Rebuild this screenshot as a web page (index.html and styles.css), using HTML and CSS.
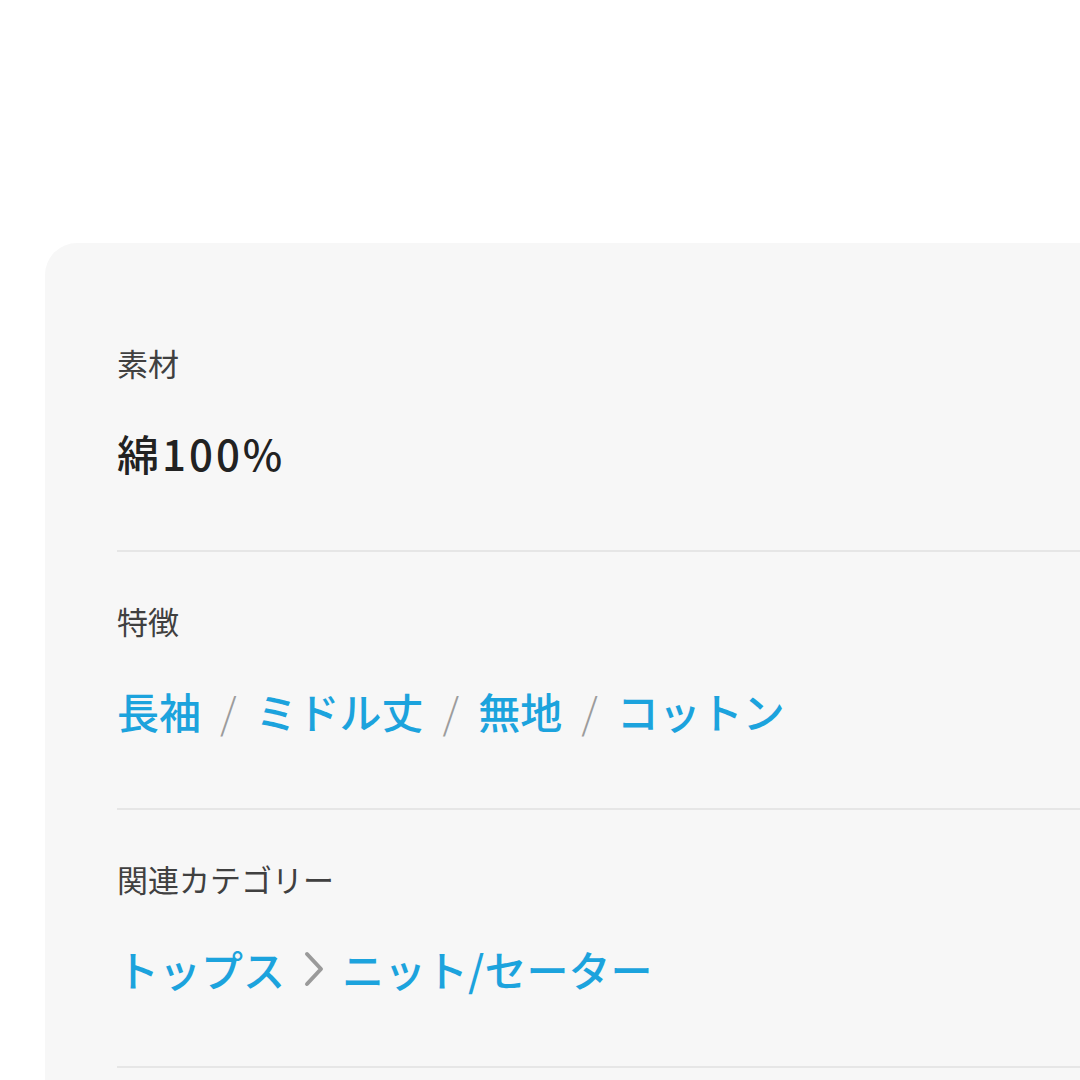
FILE: index.html
```html
<!DOCTYPE html>
<html lang="ja">
<head>
<meta charset="utf-8">
<link rel="stylesheet" href="styles.css">
</head>
<body>
<div class="page">
  <div class="card">
    <section class="row">
      <div class="label">素材</div>
      <div class="value material">綿100%</div>
    </section>
    <section class="row">
      <div class="label">特徴</div>
      <div class="value links">
        <span class="link">長袖</span><span class="sep">/</span><span class="link">ミドル丈</span><span class="sep">/</span><span class="link">無地</span><span class="sep">/</span><span class="link">コットン</span>
      </div>
    </section>
    <section class="row">
      <div class="label">関連カテゴリー</div>
      <div class="value links">
        <span class="link">トップス</span><span class="chev"><svg width="22" height="36" viewBox="0 0 22 36"><path d="M4 3 L18 18 L4 33" fill="none" stroke="#9a9a9a" stroke-width="4" stroke-linecap="round" stroke-linejoin="round"/></svg></span><span class="link">ニット/セーター</span>
      </div>
    </section>
    <section class="row"></section>
  </div>
</div>
</body>
</html>
```

FILE: styles.css
```css
html, body {
  margin: 0;
  padding: 0;
  background: #ffffff;
  overflow: hidden;
}
body {
  width: 1080px;
  height: 1080px;
  font-family: "Noto Sans CJK JP", "Noto Sans", sans-serif;
}
.page {
  padding-top: 243px;
  padding-left: 45px;
}
.card {
  width: 1100px;
  background: #f7f7f7;
  border-top-left-radius: 32px;
  padding-top: 51px;
  padding-left: 72px;
}
.row {
  padding-top: 47px;
  padding-bottom: 69px;
  border-bottom: 2px solid #e6e6e6;
}
.label {
  font-size: 31px;
  line-height: 44px;
  color: #404040;
}
.value {
  margin-top: 40px;
  font-size: 42px;
  line-height: 56px;
  font-weight: 500;
  color: #222222;
}
.material {
  letter-spacing: 3px;
}
.links {
  display: flex;
  align-items: center;
}
.link {
  color: #1ca3dd;
  font-weight: 500;
}
.sep {
  color: #9c9c9c;
  font-weight: 300;
  margin: 0 19px;
}
.chev {
  display: flex;
  align-items: center;
  margin: 0 17px 0 18px;
}
```
